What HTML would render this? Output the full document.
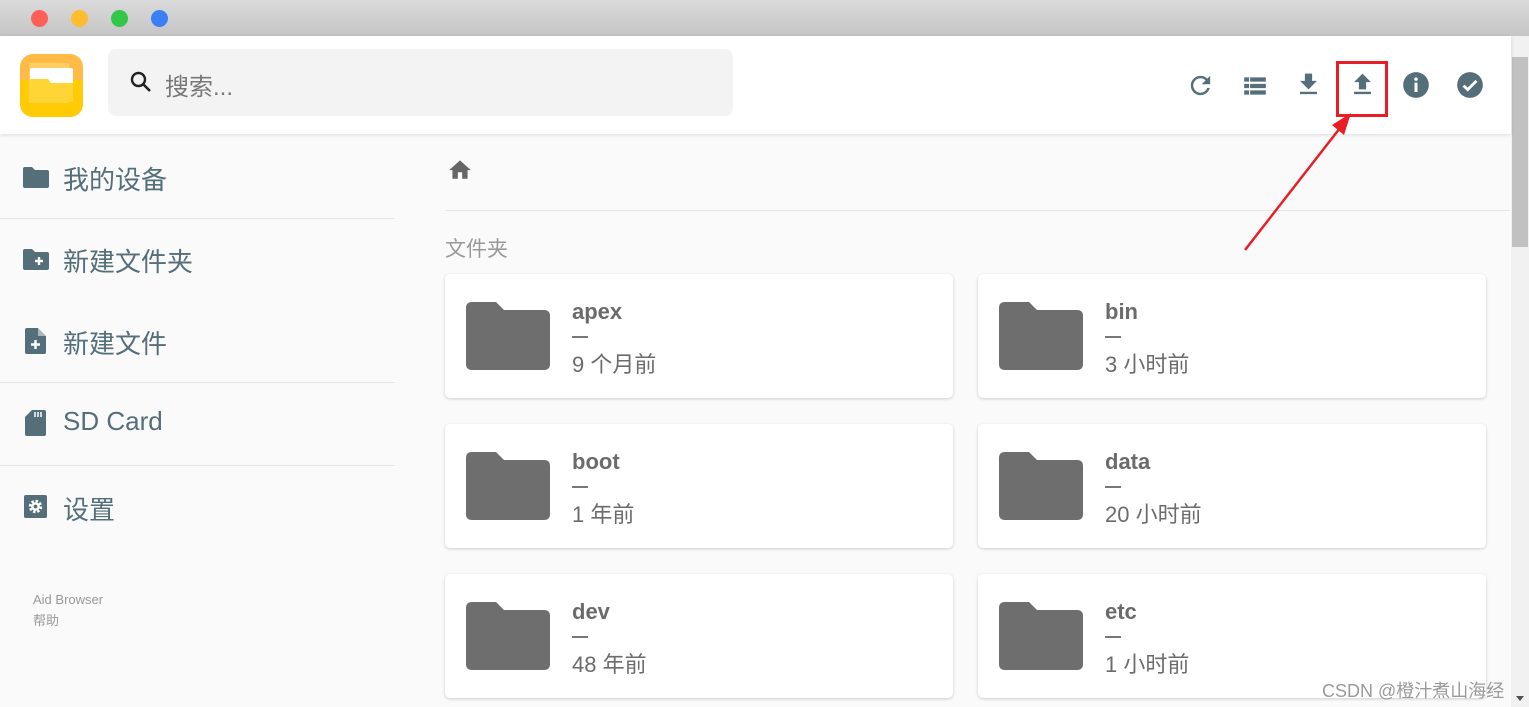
<!DOCTYPE html>
<html><head><meta charset="utf-8"><style>
*{margin:0;padding:0;box-sizing:border-box}
body{width:1529px;height:707px;overflow:hidden;background:#fafafa;font-family:"Liberation Sans","Noto Sans CJK SC",sans-serif;position:relative}
.tb{position:absolute;left:0;top:0;width:1529px;height:36px;background:linear-gradient(#dadada,#c5c5c5)}
.dot{position:absolute;top:10px;width:17px;height:17px;border-radius:50%}
.hdr{position:absolute;left:0;top:36px;width:1511px;height:98px;background:#fff;box-shadow:0 1px 4px rgba(0,0,0,.12);z-index:2}
.search{position:absolute;left:108px;top:13px;width:625px;height:67px;background:#f3f3f3;border-radius:8px}
.search span{position:absolute;left:57px;top:18px;font-size:24px;color:#777}
.ic{position:absolute;top:36px}
.item{position:absolute;left:0;width:395px;font-size:26px;color:#546e7a}
.item span{position:absolute;left:63px;top:-4px}
.hr{position:absolute;left:0;width:395px;height:1px;background:#e6e6e6}
.card{position:absolute;width:508px;height:124px;background:#fff;border-radius:5px;box-shadow:0 1px 3px rgba(0,0,0,.18)}
.card svg{position:absolute;left:21px;top:28px}
.nm{position:absolute;left:127px;top:25px;font-size:22px;font-weight:bold;color:#6b6b6b}
.dash{position:absolute;left:127px;top:62px;width:16px;height:1.5px;background:#777}
.tm{position:absolute;left:127px;top:73px;font-size:22px;color:#6b6b6b}
.sb{position:absolute;left:1511px;top:36px;width:18px;height:671px;background:#f1f1f1}
</style></head><body>
<div class="tb">
<div class="dot" style="left:31px;background:#fe5f57"></div>
<div class="dot" style="left:71px;background:#febc2e"></div>
<div class="dot" style="left:111px;background:#33c748"></div>
<div class="dot" style="left:151px;background:#3a7ff6"></div>
</div>
<div class="hdr">
<svg style="position:absolute;left:20px;top:18px" width="63" height="63" viewBox="0 0 63 63"><rect width="63" height="63" rx="13" fill="#ffbb45"/><path d="M0 26H63V50A13 13 0 0 1 50 63H13A13 13 0 0 1 0 50Z" fill="#ffcb05"/><rect x="9" y="9" width="40" height="40" rx="2" fill="#ffd97a" opacity=".6"/><rect x="10" y="14" width="43" height="30" rx="2" fill="#fff"/><path d="M10 25H28L31 29H53V47Q53 48 52 48H11Q10 48 10 47Z" fill="#ffd535"/></svg>
<div class="search"><svg style="position:absolute;left:21px;top:21px" width="24" height="24" viewBox="0 0 24 24"><circle cx="9.5" cy="9.5" r="6.5" fill="none" stroke="#222" stroke-width="2.4"/><path d="M14 14l7 7" stroke="#222" stroke-width="2.6"/></svg><span>搜索...</span></div>
<svg class="ic" style="left:1186px;top:35px" width="29" height="29" viewBox="0 0 24 24"><path fill="#546e7a" d="M17.65 6.35A7.958 7.958 0 0 0 12 4c-4.42 0-7.99 3.58-7.99 8s3.57 8 7.99 8c3.73 0 6.84-2.55 7.73-6h-2.08A5.99 5.99 0 0 1 12 18c-3.31 0-6-2.69-6-6s2.69-6 6-6c1.66 0 3.14.69 4.22 1.78L13 11h7V4l-2.35 2.35z"/></svg>
<svg class="ic" style="left:1242px;top:37px" width="26" height="26" viewBox="0 0 24 24"><path fill="#546e7a" d="M2 4h20v4H2zM2 10h20v4H2zM2 16h20v4H2z"/><path stroke="#fff" stroke-width="1" d="M7 4v16"/></svg>
<svg class="ic" style="left:1294px;top:34px" width="29" height="29" viewBox="0 0 24 24"><path fill="#546e7a" d="M19 9h-4V3H9v6H5l7 7 7-7zM5 18v2h14v-2H5z"/></svg>
<svg class="ic" style="left:1348px;top:34px" width="29" height="29" viewBox="0 0 24 24"><path fill="#546e7a" d="M9 16h6v-6h4l-7-7-7 7h4zm-4 2h14v2H5z"/></svg>
<svg class="ic" style="left:1402px;top:35px" width="28" height="28" viewBox="0 0 24 24"><circle cx="12" cy="12" r="11" fill="#546e7a"/><rect x="10.7" y="10" width="2.6" height="8" fill="#fff"/><circle cx="12" cy="7" r="1.5" fill="#fff"/></svg>
<svg class="ic" style="left:1456px;top:35px" width="28" height="28" viewBox="0 0 24 24"><circle cx="12" cy="12" r="11" fill="#546e7a"/><path d="M6.5 12.5l3.5 3.5 7.5-7.5" fill="none" stroke="#fff" stroke-width="2.4"/></svg>
</div>
<div class="sb"><div style="position:absolute;left:1px;top:21px;width:16px;height:190px;background:#c1c1c1"></div><div style="position:absolute;left:5px;top:660px;border:4px solid transparent;border-top:5px solid #505050"></div></div>

<div class="item" style="top:164px"><svg style="position:absolute;left:23px;top:3px" width="26" height="21" viewBox="0 0 26 21"><path fill="#546e7a" d="M0 2Q0 0 2 0H9L12 3H24Q26 3 26 5V19Q26 21 24 21H2Q0 21 0 19Z"/></svg><span>我的设备</span></div>
<div class="hr" style="top:218px"></div>
<div class="item" style="top:246px"><svg style="position:absolute;left:23px;top:3px" width="26" height="21" viewBox="0 0 26 21"><path fill="#546e7a" d="M0 2Q0 0 2 0H9L12 3H24Q26 3 26 5V19Q26 21 24 21H2Q0 21 0 19Z"/><path d="M16 8v8M12 12h8" stroke="#fff" stroke-width="2.4"/></svg><span>新建文件夹</span></div>
<div class="item" style="top:328px"><svg style="position:absolute;left:25px;top:0px" width="21" height="26" viewBox="0 0 21 26"><path fill="#546e7a" d="M2 0H13L21 8V24Q21 26 19 26H2Q0 26 0 24V2Q0 0 2 0Z"/><path d="M13 0V8H21" fill="#fff" opacity=".5"/><path d="M10.5 12v9M6 16.5h9" stroke="#fff" stroke-width="2.4"/></svg><span>新建文件</span></div>
<div class="hr" style="top:382px"></div>
<div class="item" style="top:410px"><svg style="position:absolute;left:25px;top:0px" width="21" height="26" viewBox="0 0 21 26"><path fill="#546e7a" d="M7 0H19Q21 0 21 2V24Q21 26 19 26H2Q0 26 0 24V7Z"/><path d="M10 2v5M13 2v5M16 2v5" stroke="#fff" stroke-width="1.5"/></svg><span>SD Card</span></div>
<div class="hr" style="top:465px"></div>
<div class="item" style="top:494px"><svg style="position:absolute;left:24px;top:1px" width="23" height="23" viewBox="0 0 24 24"><rect width="24" height="24" rx="2" fill="#546e7a"/><circle cx="12" cy="12" r="5.5" fill="none" stroke="#fff" stroke-width="3" stroke-dasharray="2.5 1.8"/><circle cx="12" cy="12" r="4.5" fill="#fff"/><circle cx="12" cy="12" r="2" fill="#546e7a"/></svg><span>设置</span></div>
<div style="position:absolute;left:33px;top:589px;font-size:13px;color:#999;line-height:21px">Aid Browser<br>帮助</div>

<svg style="position:absolute;left:447px;top:157px" width="26" height="24" viewBox="0 0 24 22"><path fill="#666" d="M10 20v-6h4v6h5v-8h3L12 3 2 12h3v8z"/></svg>
<div style="position:absolute;left:445px;top:210px;width:1065px;height:1px;background:#e6e6e6"></div>
<div style="position:absolute;left:445px;top:233px;font-size:21px;color:#999">文件夹</div>

<div class="card" style="left:445px;top:274px"><svg width="84" height="68" viewBox="0 0 84 68"><path fill="#6e6e6e" d="M0 6Q0 0 6 0H30L38 8H78Q84 8 84 14V62Q84 68 78 68H6Q0 68 0 62Z"/></svg><div class="nm">apex</div><div class="dash"></div><div class="tm">9 个月前</div></div>
<div class="card" style="left:978px;top:274px"><svg width="84" height="68" viewBox="0 0 84 68"><path fill="#6e6e6e" d="M0 6Q0 0 6 0H30L38 8H78Q84 8 84 14V62Q84 68 78 68H6Q0 68 0 62Z"/></svg><div class="nm">bin</div><div class="dash"></div><div class="tm">3 小时前</div></div>
<div class="card" style="left:445px;top:424px"><svg width="84" height="68" viewBox="0 0 84 68"><path fill="#6e6e6e" d="M0 6Q0 0 6 0H30L38 8H78Q84 8 84 14V62Q84 68 78 68H6Q0 68 0 62Z"/></svg><div class="nm">boot</div><div class="dash"></div><div class="tm">1 年前</div></div>
<div class="card" style="left:978px;top:424px"><svg width="84" height="68" viewBox="0 0 84 68"><path fill="#6e6e6e" d="M0 6Q0 0 6 0H30L38 8H78Q84 8 84 14V62Q84 68 78 68H6Q0 68 0 62Z"/></svg><div class="nm">data</div><div class="dash"></div><div class="tm">20 小时前</div></div>
<div class="card" style="left:445px;top:574px"><svg width="84" height="68" viewBox="0 0 84 68"><path fill="#6e6e6e" d="M0 6Q0 0 6 0H30L38 8H78Q84 8 84 14V62Q84 68 78 68H6Q0 68 0 62Z"/></svg><div class="nm">dev</div><div class="dash"></div><div class="tm">48 年前</div></div>
<div class="card" style="left:978px;top:574px"><svg width="84" height="68" viewBox="0 0 84 68"><path fill="#6e6e6e" d="M0 6Q0 0 6 0H30L38 8H78Q84 8 84 14V62Q84 68 78 68H6Q0 68 0 62Z"/></svg><div class="nm">etc</div><div class="dash"></div><div class="tm">1 小时前</div></div>

<div style="position:absolute;left:1322px;top:677px;font-size:18px;color:#9a9a9a;z-index:5">CSDN @橙汁煮山海经</div>

<div style="position:absolute;left:1336px;top:61px;width:52px;height:56px;border:3px solid #e81d25;z-index:5"></div>
<svg style="position:absolute;left:1240px;top:110px;z-index:5" width="120" height="145" viewBox="0 0 120 145"><path d="M5 140L100 18" stroke="#e81d25" stroke-width="2.5"/><path d="M111 3L92 15L104 25Z" fill="#e81d25"/></svg>
</body></html>
